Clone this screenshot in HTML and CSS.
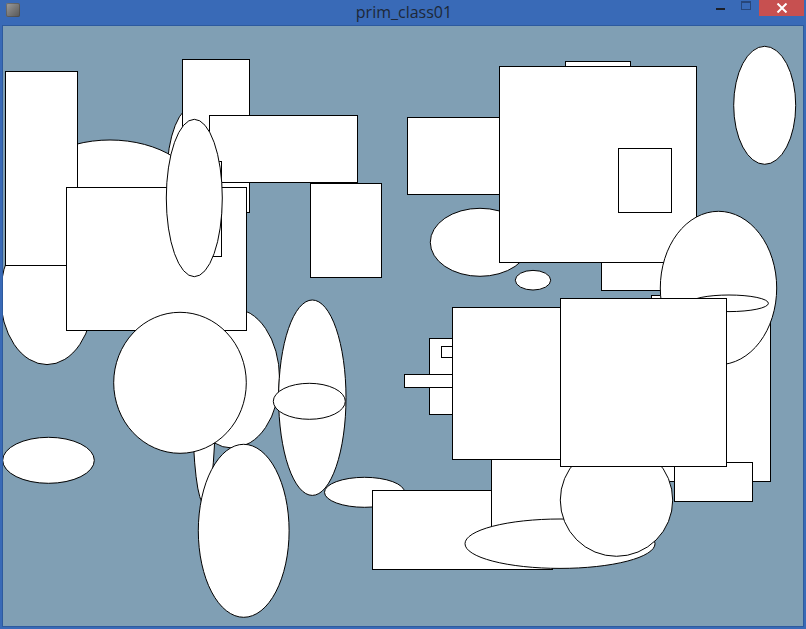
FILE: index.html
```html
<!DOCTYPE html>
<html>
<head>
<meta charset="utf-8">
<title>prim_class01</title>
<link rel="stylesheet" href="styles.css">
</head>
<body>
<div class="window">
  <div class="titlebar">
    <div class="titlebar-left"><div class="app-icon"></div></div>
    <div class="title">prim_class01</div>
    <div class="controls">
      <div class="btn btn-min"><span class="min-bar"></span></div>
      <div class="btn btn-max"><span class="max-box"></span></div>
      <div class="btn btn-close">
        <svg width="14" height="10" viewBox="0 0 14 10"><path d="M2.5 0.5 L11.5 9.5 M11.5 0.5 L2.5 9.5" stroke="#fff" stroke-width="2"/></svg>
      </div>
    </div>
  </div>
  <div class="frame">
    <svg class="sketch" width="800" height="600" viewBox="3 26 800 600">
      <g class="shapes" fill="#fff" stroke="#000" stroke-width="1">
        <rect x="565.5" y="61.5" width="65" height="59"/>
        <rect x="407.5" y="117.5" width="133" height="77"/>
        <ellipse cx="480" cy="242.3" rx="49.7" ry="34"/>
        <rect x="601.5" y="230.5" width="89" height="60"/>
        <rect x="499.5" y="66.5" width="197" height="196"/>
        <rect x="618.5" y="148.5" width="53" height="64"/>
        <ellipse cx="533" cy="280.2" rx="17.7" ry="9.8"/>
        <ellipse cx="764.7" cy="105.3" rx="31" ry="59"/>
        <rect x="651.5" y="295.5" width="119" height="186"/>
        <ellipse cx="718.5" cy="288" rx="58.2" ry="76.7"/>
        <ellipse cx="729" cy="303.3" rx="39.4" ry="8.3"/>

        <ellipse cx="195" cy="175" rx="28" ry="70"/>
        <ellipse cx="110" cy="198" rx="90" ry="58"/>
        <ellipse cx="47" cy="295.6" rx="46.5" ry="69"/>
        <rect x="5.5" y="71.5" width="72" height="194"/>
        <rect x="182.5" y="59.5" width="67" height="153"/>
        <rect x="209.5" y="115.5" width="148" height="67"/>
        <rect x="310.5" y="183.5" width="71" height="94"/>
        <ellipse cx="232" cy="378" rx="47.5" ry="70"/>
        <ellipse cx="204" cy="412" rx="11.2" ry="91.5"/>
        <rect x="66.5" y="187.5" width="180" height="143"/>
        <rect x="185.5" y="161.5" width="36" height="95"/>
        <ellipse cx="194.3" cy="198" rx="28" ry="78.7"/>
        <ellipse cx="180" cy="382.8" rx="66.3" ry="70.5"/>
        <ellipse cx="243.7" cy="530.8" rx="45.4" ry="86.5"/>
        <ellipse cx="312.3" cy="397.7" rx="33.7" ry="97.7"/>
        <ellipse cx="309.3" cy="401.3" rx="36" ry="18"/>
        <ellipse cx="48.5" cy="460.3" rx="45.8" ry="23"/>

        <ellipse cx="364.5" cy="492.3" rx="40" ry="15"/>
        <rect x="372.5" y="490.5" width="180" height="79"/>
        <rect x="491.5" y="420.5" width="129" height="125"/>
        <ellipse cx="560" cy="543.7" rx="95" ry="24.7"/>
        <rect x="429.5" y="338.5" width="41" height="76"/>
        <rect x="441.5" y="346.5" width="29" height="11"/>
        <rect x="404.5" y="374.5" width="66" height="13"/>
        <rect x="452.5" y="307.5" width="148" height="152"/>
        <ellipse cx="616.5" cy="500.1" rx="56.2" ry="56.2"/>
        <rect x="674.5" y="462.5" width="78" height="39"/>
        <rect x="560.5" y="298.5" width="166" height="168"/>
      </g>
    </svg>
  </div>
</div>
</body>
</html>
```

FILE: styles.css
```css
html, body {
  margin: 0;
  padding: 0;
  background: #3a6bb8;
}

.window {
  width: 806px;
  height: 629px;
  background: #396ab7;
  display: flex;
  flex-direction: column;
  box-sizing: border-box;
  padding: 0 2px 2px 2px;
  overflow: hidden;
}

.titlebar {
  height: 25px;
  flex: none;
  display: grid;
  grid-template-columns: 1fr auto 1fr;
  align-items: start;
  margin: 0 -2px;
}

.titlebar-left {
  display: flex;
}

.app-icon {
  width: 14px;
  height: 14px;
  margin: 3px 0 0 6px;
  border-radius: 2px;
  background: linear-gradient(135deg, #a0a0a0 0%, #7c7c7c 45%, #555 100%);
  box-shadow: inset 0 0 0 1px rgba(60, 60, 60, 0.45);
}

.title {
  font-family: "Open Sans", "Noto Sans", sans-serif;
  font-size: 16px;
  line-height: 24px;
  color: #1d2838;
  padding-left: 2px;
}

.controls {
  display: flex;
  justify-content: flex-end;
  align-items: flex-start;
  height: 16px;
}

.btn {
  height: 16px;
  display: flex;
  align-items: center;
  justify-content: center;
}

.btn-min {
  width: 26px;
}

.min-bar {
  display: block;
  width: 9px;
  height: 2px;
  background: #1b1f2a;
  margin-top: 2px;
}

.btn-max {
  width: 26px;
}

.max-box {
  display: block;
  width: 8px;
  height: 6px;
  border: 1px solid #27467a;
  border-top-width: 2px;
  margin-top: -5px;
}

.btn-close {
  width: 45px;
  background: #c75050;
  margin-right: 2px;
}

.frame {
  flex: none;
  width: 800px;
  height: 600px;
  border: 1px solid #2d5a9e;
  background: #809fb4;
}

.sketch {
  display: block;
  background: #809fb4;
}
```
